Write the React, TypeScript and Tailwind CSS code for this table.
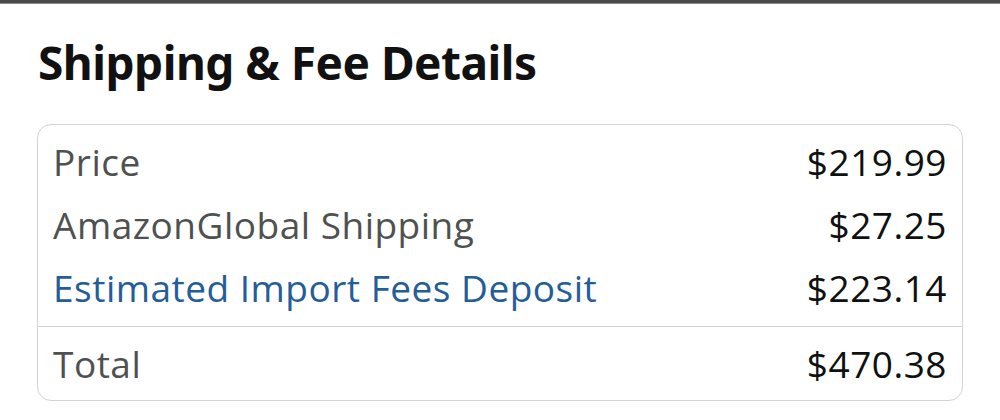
import React from 'react';

const rows = [
    { label: 'Price', value: '$219.99', link: false },
    { label: 'AmazonGlobal Shipping', value: '$27.25', link: false },
    { label: 'Estimated Import Fees Deposit', value: '$223.14', link: true },
];

const App: React.FC = () => {
    return (
        <div className="w-[1000px] h-[420px] bg-white overflow-hidden font-['Open_Sans',sans-serif]">
            {/* bottom edge of the section scrolled off above */}
            <div className="h-[4px] bg-[#4a4a4a] border-b border-[#8a8a8a]" />

            <h2 className="pl-[38px] pt-[32px] text-[46px] leading-[52px] font-bold text-[#111] tracking-[-0.5px] font-['Noto_Sans',sans-serif]">
                Shipping &amp; Fee Details
            </h2>

            <div className="mx-[37px] mt-[36px] border border-[#d2d4d4] rounded-[14px]">
                <div className="pt-[5px] pb-[7px]">
                    {rows.map(row => (
                        <div key={row.label} className="h-[63px] flex items-center justify-between px-[15px] text-[37px] tracking-[0.5px]">
                            <span className={row.link ? 'text-[#245d98]' : 'text-[#4f5151]'}>{row.label}</span>
                            <span className="text-[#0f1111]">{row.value}</span>
                        </div>
                    ))}
                </div>
                <div className="border-t border-[#d2d4d4] h-[74px] flex items-center justify-between px-[15px] text-[37px] tracking-[0.5px]">
                    <span className="text-[#4f5151]">Total</span>
                    <span className="text-[#0f1111]">$470.38</span>
                </div>
            </div>
        </div>
    );
};

export default App;
